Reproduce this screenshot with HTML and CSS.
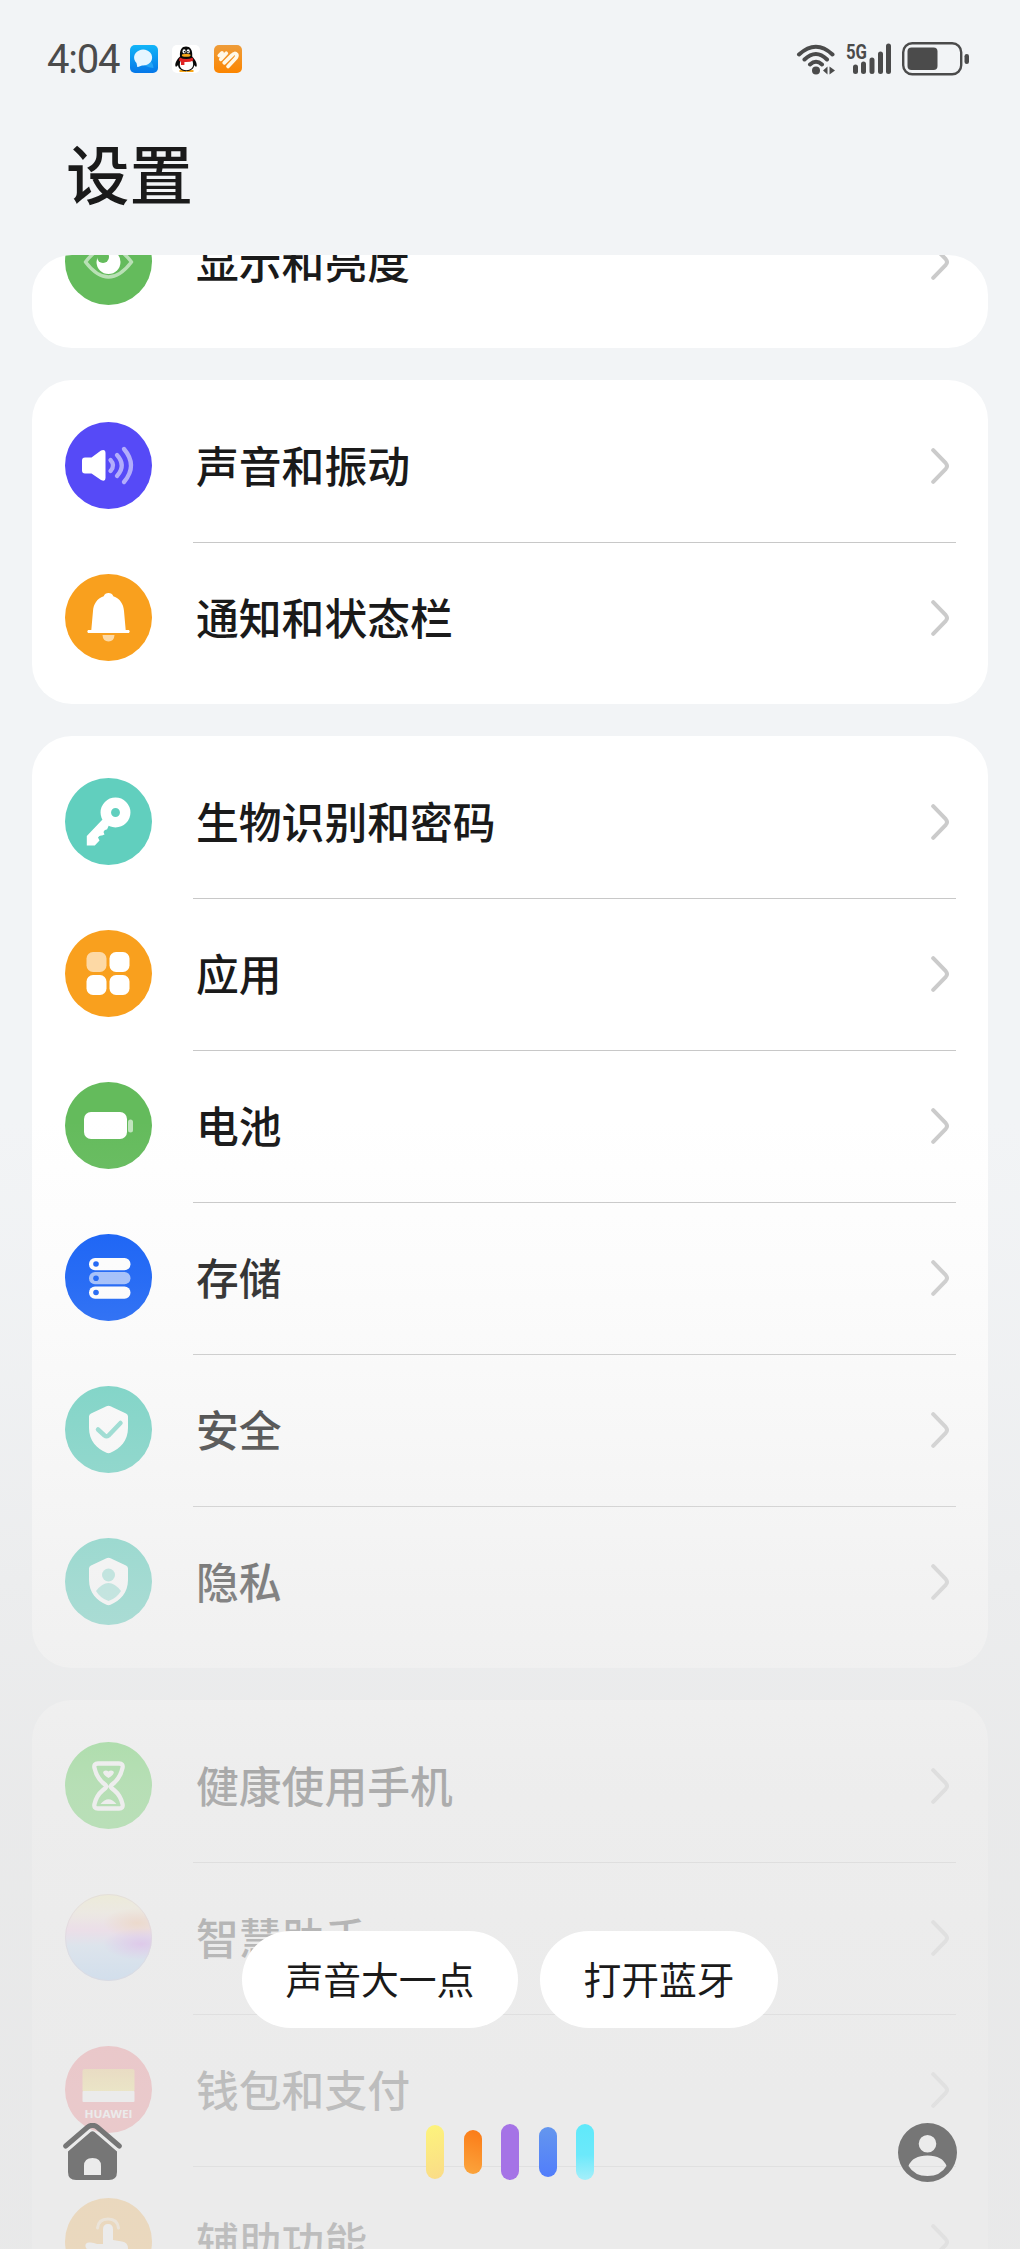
FILE: index.html
```html
<!DOCTYPE html>
<html lang="zh-CN">
<head>
<meta charset="utf-8">
<title>设置</title>
<link rel="stylesheet" href="styles.css">
</head>
<body>
<svg class="defs" width="0" height="0" aria-hidden="true">
  <defs>
    <symbol id="chevron" viewBox="0 0 20 36"><path d="M2.200 2.200 14.800 15.200Q17.200 18 14.800 20.800L2.200 33.800" fill="none" stroke="currentColor" stroke-width="4" stroke-linecap="round"/></symbol>
  </defs>
</svg>
<div class="screen">
  <header class="status">
    <div class="status-left">
      <span class="clock">4:04</span>
      <svg class="app" viewBox="0 0 28 28"><defs><linearGradient id="sky" x2="0" y2="1"><stop stop-color="#12b5f8"/><stop offset="1" stop-color="#0577e8"/></linearGradient></defs><rect width="28" height="28" rx="5" fill="url(#sky)"/><path d="M20 16a6 6 0 0 1 3 4l.5 3-4.500-.8-5-2z" fill="#24a5f6"/><path d="M7 20.500 7.300 22 8 22l4-1.500A9 8 0 1 0 6.500 18z" fill="#e6f6ff"/></svg>
      <svg class="app" viewBox="0 0 28 28"><rect width="28" height="28" rx="5" fill="#fff"/><path d="M7.500 25h7v2h-7zM15 25h6.500v2H15z" fill="#f7a71b"/><path d="M8 11.500C7.500 4.500 10 1.500 14 1.500s6.800 3 6.200 10c2.500 2.600 5 6.500 4.500 9.500-.4 1.500-1.600.5-2.500-1-.4 4-3.500 6.200-8 6.200S6.500 24 6 20c-1 1.500-2.200 2.500-2.600 1C2.800 18 5.300 14 8 11.500z" fill="#090909"/><path d="M8.500 16h12c2 6-1 9.200-6.200 9.200S6.500 22 8.500 16z" fill="#fff"/><ellipse cx="12.100" cy="6.400" rx="1.600" ry="2.100" fill="#fff"/><ellipse cx="16.200" cy="6.400" rx="1.600" ry="2.100" fill="#fff"/><circle cx="12.500" cy="6.700" r=".8"/><circle cx="15.900" cy="6.700" r=".8"/><ellipse cx="14.200" cy="10.300" rx="4.400" ry="1.500" fill="#f7a71b"/><path d="M7.800 12.500q6.400 3 12.800 0l.8 3q-4 2-9 1.500v3H9v-3.500l-2-1z" fill="#e02424"/></svg>
      <svg class="app" viewBox="0 0 28 28"><defs><linearGradient id="amber" x2="0" y2="1"><stop stop-color="#ee9c3a"/><stop offset="1" stop-color="#fc8500"/></linearGradient></defs><rect width="28" height="28" rx="5" fill="url(#amber)"/><path d="M5.300 10.500 8 7.900M6.800 14.300 12.300 8.300M10.200 17.800 18 10.200Q20.800 7 22.800 9.700 23.500 11.500 21 14L14 21.500" fill="none" stroke="#fff8e8" stroke-width="3.700" stroke-linecap="round"/></svg>
    </div>
    <div class="status-right">
      <svg width="40" height="32" viewBox="0 0 40 32" fill="none" stroke="#4b4b4b" stroke-width="4" stroke-linecap="round"><path d="M3 11.500Q20-4 36.500 11.500M8.500 16.500Q20 5.500 31 16.500M14 21.500Q20 16 26 21.500"/><circle cx="20" cy="27.500" r="4" fill="#4b4b4b" stroke="none"/><path d="M31.500 23.500v8l-4.500-4zM33.500 23.500v8l5.500-4z" fill="#4b4b4b" stroke="none"/></svg>
      <svg width="46" height="32" viewBox="0 0 46 32"><text x="0" y="16" class="net" textLength="21" lengthAdjust="spacingAndGlyphs">5G</text><path d="M9.500 24v4.500M17.500 21v7.500M26 17v11.500M34.500 11v17.500M42.500 3v25.500" stroke="#4b4b4b" stroke-width="5" stroke-linecap="round"/></svg>
      <svg width="68" height="34" viewBox="0 0 68 34"><rect x="1.200" y="1.200" width="58" height="31" rx="9" fill="none" stroke="#4b4b4b" stroke-width="2.400"/><rect x="5.500" y="5.500" width="30" height="22.500" rx="4" fill="#4b4b4b"/><rect x="62.500" y="12" width="4.500" height="10" rx="2.200" fill="#4b4b4b"/></svg>
    </div>
  </header>
  <h1 class="title">设置</h1>

  <main class="viewport">
    <section class="card first">
      <div class="row"><svg class="icon" viewBox="0 0 87 87"><circle cx="43.500" cy="43.500" r="43.500" fill="#64bb5c"/><path d="M20.500 44Q43.500 14 66.500 44 43.500 74 20.500 44z" fill="none" stroke="#fff" stroke-opacity=".55" stroke-width="3.500" stroke-linejoin="round"/><circle cx="43.500" cy="44" r="12" fill="#fff"/><circle cx="38" cy="39" r="6" fill="#64bb5c"/></svg><span class="label">显示和亮度</span><svg class="chev"><use href="#chevron"/></svg></div>
    </section>

    <section class="card">
      <div class="row"><svg class="icon" viewBox="0 0 87 87"><circle cx="43.500" cy="43.500" r="43.500" fill="#564af7"/><path d="M20 35.500h6.500L36 28.500q4.500-1.500 4.500 2.500v25q0 4-4.500 2L26.500 51.500H20q-3 0-3-3v-10q0-3 3-3z" fill="#fff"/><path d="M45.500 38q5 5.500 0 11M52 33q9.500 10.500 0 21M59 27q14 16.500 0 33" fill="none" stroke="#fff" stroke-opacity=".55" stroke-width="4.300" stroke-linecap="round"/></svg><span class="label">声音和振动</span><svg class="chev"><use href="#chevron"/></svg></div>
      <div class="row"><svg class="icon" viewBox="0 0 87 87"><circle cx="43.500" cy="43.500" r="43.500" fill="#f9a01e"/><path d="M43.500 19q3.500 0 4.800 3.200C55 24.500 58.500 30 59 37l1.700 19h3.300q1.500 1.500 0 3H23q-1.500-1.500 0-3h3.300L28 37c.5-7 4-12.500 10.700-14.800Q40 19 43.500 19z" fill="#fff"/><path d="M37.500 61h12q-.5 6.500-6 6.500t-6-6.500z" fill="#fff" fill-opacity=".6"/></svg><span class="label">通知和状态栏</span><svg class="chev"><use href="#chevron"/></svg></div>
    </section>

    <section class="card">
      <div class="row"><svg class="icon" viewBox="0 0 87 87"><circle cx="43.500" cy="43.500" r="43.500" fill="#61cfbe"/><path d="M37.500 41.500 21.800 58v9.500h8L34.500 62.500 33 59.500q1.500-2.500 4-2l2.500-1-1-2.500q1-3 3.500-2.500L44 47z" fill="#fff"/><circle cx="50.500" cy="34.500" r="9.700" fill="none" stroke="#fff" stroke-width="10.500"/></svg><span class="label">生物识别和密码</span><svg class="chev"><use href="#chevron"/></svg></div>
      <div class="row"><svg class="icon" viewBox="0 0 87 87"><circle cx="43.500" cy="43.500" r="43.500" fill="#f9a01e"/><rect x="21.500" y="22" width="20" height="20" rx="6.500" fill="#fff" fill-opacity=".6"/><g fill="#fff"><rect x="44.500" y="22" width="20" height="20" rx="6.500"/><rect x="21.500" y="45" width="20" height="20" rx="6.500"/><rect x="44.500" y="45" width="20" height="20" rx="6.500"/></g></svg><span class="label">应用</span><svg class="chev"><use href="#chevron"/></svg></div>
      <div class="row"><svg class="icon" viewBox="0 0 87 87"><circle cx="43.500" cy="43.500" r="43.500" fill="#64bb5c"/><rect x="19" y="30" width="43" height="27" rx="7" fill="#fff"/><rect x="63" y="37.500" width="5" height="13" rx="2.500" fill="#fff" fill-opacity=".6"/></svg><span class="label">电池</span><svg class="chev"><use href="#chevron"/></svg></div>
      <div class="row"><svg class="icon" viewBox="0 0 87 87"><circle cx="43.500" cy="43.500" r="43.500" fill="#0a59f7"/><rect x="24" y="24" width="41.500" height="12.300" rx="6" fill="#fff"/><rect x="24" y="38" width="41.500" height="12.300" rx="6" fill="#fff" fill-opacity=".6"/><rect x="24" y="52.500" width="41.500" height="12.300" rx="6" fill="#fff"/><g fill="#0a59f7"><circle cx="31" cy="30" r="2.800"/><circle cx="31" cy="44.200" r="2.800"/><circle cx="31" cy="58.500" r="2.800"/></g></svg><span class="label">存储</span><svg class="chev"><use href="#chevron"/></svg></div>
      <div class="row"><svg class="icon" viewBox="0 0 87 87"><circle cx="43.500" cy="43.500" r="43.500" fill="#61cfbe"/><path d="M41.500 20.300q2-1 4 0L61 27.500q2 1 2 3V42c0 13-8 20.500-17.500 24.800q-2 .8-4 0C32 62.500 24 55 24 42V30.500q0-2 2-3z" fill="#fff"/><path d="M33 43.500 39.500 49.500Q41.500 51 43.500 49.500L55.500 37" fill="none" stroke="#61cfbe" stroke-opacity=".8" stroke-width="4.500" stroke-linecap="round"/></svg><span class="label">安全</span><svg class="chev"><use href="#chevron"/></svg></div>
      <div class="row"><svg class="icon" viewBox="0 0 87 87"><circle cx="43.500" cy="43.500" r="43.500" fill="#61cfbe"/><path d="M41.500 20.300q2-1 4 0L61 27.500q2 1 2 3V42c0 13-8 20.500-17.500 24.800q-2 .8-4 0C32 62.500 24 55 24 42V30.500q0-2 2-3z" fill="#fff"/><g fill="#61cfbe" fill-opacity=".6"><circle cx="43.500" cy="37" r="6.500"/><path d="M31 53q12.500-16 25 0-4.500 7.500-12.500 10Q35.500 60.500 31 53z"/></g></svg><span class="label">隐私</span><svg class="chev"><use href="#chevron"/></svg></div>
    </section>

    <section class="card">
      <div class="row"><svg class="icon" viewBox="0 0 87 87"><circle cx="43.500" cy="43.500" r="43.500" fill="#41cc3c"/><path d="M33 21.500H54q4.500 0 3.500 4.500-2 9-8 14.500l-3 2.500q-1.500 1.500 0 3l3 2.500q6 5 8 13.500 1 4.500-3.500 4.500H33q-4.500 0-3.500-4.500 2-8.500 8-13.500l3-2.500q1.500-1.500 0-3l-3-2.500q-6-5.500-8-14.500-1-4.500 3.500-4.500z" fill="none" stroke="#fff" stroke-width="4.300" stroke-linejoin="round"/><path d="M43.500 36q-7.500-5-4.500-7 2.500-1 4.500.5 2-1.500 4.500-.5 3 2-4.500 7zM35.500 62q8-9.500 16 0z" fill="#fff"/></svg><span class="label">健康使用手机</span><svg class="chev"><use href="#chevron"/></svg></div>
      <div class="row"><svg class="icon" viewBox="0 0 87 87"><defs><linearGradient id="orb" x2="0" y2="1"><stop stop-color="#fff9b0"/><stop offset=".22" stop-color="#fff0d8"/><stop offset=".42" stop-color="#fbc6ee"/><stop offset=".6" stop-color="#bcdcff"/><stop offset="1" stop-color="#8cc4ff"/></linearGradient><radialGradient id="violet"><stop stop-color="#c36bf5"/><stop offset="1" stop-color="#c36bf5" stop-opacity="0"/></radialGradient><radialGradient id="peach"><stop stop-color="#ffb27a"/><stop offset="1" stop-color="#ffb27a" stop-opacity="0"/></radialGradient><clipPath id="disc"><circle cx="43.500" cy="43.500" r="43.500"/></clipPath></defs><g clip-path="url(#disc)"><rect width="87" height="87" fill="url(#orb)"/><ellipse cx="72" cy="29" rx="34" ry="15" fill="url(#peach)"/><ellipse cx="76" cy="50" rx="38" ry="16" fill="url(#violet)"/></g><circle cx="43.500" cy="43.500" r="43" fill="none" stroke="#c4a6ba" stroke-opacity=".6"/></svg><span class="label">智慧助手</span><svg class="chev"><use href="#chevron"/></svg></div>
      <div class="row"><svg class="icon" viewBox="0 0 87 87"><defs><linearGradient id="gold" x2="0" y2="1"><stop stop-color="#f2b33c"/><stop offset="1" stop-color="#fbe04b"/></linearGradient></defs><circle cx="43.500" cy="43.500" r="43.500" fill="#f7555f"/><rect x="17.500" y="23" width="52" height="23" rx="2" fill="url(#gold)"/><rect x="17.500" y="45" width="52" height="11" rx="1" fill="#fff"/><text class="brand" x="43.500" y="72" text-anchor="middle" textLength="48" lengthAdjust="spacingAndGlyphs">HUAWEI</text></svg><span class="label">钱包和支付</span><svg class="chev"><use href="#chevron"/></svg></div>
      <div class="row"><svg class="icon" viewBox="0 0 87 87"><circle cx="43.500" cy="43.500" r="43.500" fill="#f9a01e"/><path d="M38 46V31.500q0-5.500 5-5.500t5 5.500V42l9 1.500q6 1 6 7V72H38L21 50q-2-5 3-5.500 4-.5 8 1.500z" fill="#fff"/><path d="M32.500 30q1-9 10.500-9t10.500 9" fill="none" stroke="#fff" stroke-opacity=".6" stroke-width="3" stroke-linecap="round"/></svg><span class="label">辅助功能</span><svg class="chev"><use href="#chevron"/></svg></div>
    </section>
  </main>

  <div class="assistant">
    <div class="chips"><button class="chip">声音大一点</button><button class="chip">打开蓝牙</button></div>
    <div class="dock">
      <svg width="59" height="58" viewBox="0 0 59 58"><path d="M2.700 23 24.500 4.300q5-4 10 0L56.300 23" fill="none" stroke="#767676" stroke-width="5" stroke-linecap="round"/><path fill-rule="evenodd" d="M27.500 9q2-1.500 4 0L54 28.500V49q0 8-8 8H13q-8 0-8-8V28.500zM21 52h17V43q0-8-8.500-8T21 43z" fill="#767676"/></svg>
      <div class="wave"><i class="bar yellow"></i><i class="bar orange"></i><i class="bar purple"></i><i class="bar blue"></i><i class="bar cyan"></i></div>
      <svg width="59" height="59" viewBox="0 0 59 59"><path fill-rule="evenodd" d="M29.500 0a29.500 29.500 0 1 0 0 59 29.500 29.500 0 0 0 0-59zM29.500 12a8.800 8.800 0 1 1 0 17.600 8.800 8.800 0 0 1 0-17.600zM10.500 43q4-10.500 19-10.500t19 10.500q-6 10-19 10t-19-10z" fill="#767676"/></svg>
    </div>
  </div>
</div>
</body>
</html>
```
FILE: styles.css
```css
* { box-sizing: border-box; }

body {
  margin: 0;
  background: #f2f4f6;
  color: #1a1a1a;
  font-family: "Noto Sans CJK SC", sans-serif;
}

.defs { display: block; height: 0; }

.screen {
  position: relative;
  display: flex;
  flex-direction: column;
  width: 1020px;
  height: 2249px;
  overflow: hidden;
}

.status {
  display: flex;
  justify-content: space-between;
  align-items: center;
  height: 118px;
  padding: 0 50px 0 47px;
}

.status-left,
.status-right { display: flex; align-items: center; }
.status-left { gap: 14px; }
.status-right { gap: 10px; }

.clock {
  width: 69px;
  padding-top: 2px;
  font: 400 40px/48px Roboto, sans-serif;
  letter-spacing: -1.2px;
  color: #4b4b4b;
  white-space: nowrap;
}

.app { width: 28px; height: 28px; }

.net { font: 700 20px Roboto, sans-serif; fill: #4b4b4b; }

.brand { font: 700 11px "Open Sans", sans-serif; fill: #fff; }

.title {
  margin: 0;
  height: 137px;
  padding-left: 66px;
  font-size: 63.500px;
  font-weight: 500;
  line-height: 106px;
}

.viewport {
  display: flex;
  flex-direction: column;
  flex: 1;
  gap: 32px;
  min-height: 0;
  padding: 0 32px;
  overflow: hidden;
}

.card {
  flex: none;
  padding: 10px 0;
  border-radius: 40px;
  background: #fff;
}

.card.first {
  display: flex;
  flex-direction: column;
  justify-content: flex-end;
  height: 93px;
  overflow: hidden;
}

.row {
  display: flex;
  flex: none;
  align-items: center;
  height: 152px;
  padding: 0 37px 1px 33px;
}

.row + .row {
  background: linear-gradient(#c8c8c8, #c8c8c8) 161px 0 / 763px 1px no-repeat;
}

.icon { width: 87px; height: 87px; flex: none; }

.label {
  flex: 1;
  margin-left: 44px;
  padding-bottom: 4px;
  font-size: 42.800px;
  font-weight: 500;
  line-height: 64px;
}

.chev { width: 20px; height: 36px; color: #cbcbcb; }

.assistant {
  position: absolute;
  inset: 0;
  display: flex;
  flex-direction: column;
  justify-content: flex-end;
  padding: 0 63px 67px;
  background: linear-gradient(
    rgba(230, 230, 230, 0) 1120px,
    rgba(230, 230, 230, .137) 1280px,
    rgba(230, 230, 230, .314) 1430px,
    rgba(230, 230, 230, .5) 1583px,
    rgba(230, 230, 230, .715) 1785px,
    rgba(230, 230, 230, .77) 1940px,
    rgba(230, 230, 230, .8) 2090px);
}

.chips { display: flex; justify-content: center; gap: 22px; }

.chip {
  height: 97px;
  padding: 0 43.500px 4px;
  border: 0;
  border-radius: 49px;
  background: #fff;
  color: #1a1a1a;
  font: 400 37.800px/93px "Noto Sans CJK SC", sans-serif;
}

.dock {
  display: flex;
  justify-content: space-between;
  align-items: center;
  height: 60px;
  margin-top: 94px;
}

.wave { display: flex; align-items: center; gap: 19.500px; }
.bar { width: 18px; border-radius: 9px; }
.yellow { height: 54px; background: linear-gradient(160deg, #fdf47c, #fadb88); }
.orange { height: 44px; background: linear-gradient(200deg, #fb7a16, #fba63e); }
.purple { height: 56px; background: #a573e6; }
.blue { height: 50px; background: linear-gradient(#6496ee, #517dfb); }
.cyan { height: 56px; background: linear-gradient(#5fe9fa, #6ce9fb 55%, #a5effa); }
```
